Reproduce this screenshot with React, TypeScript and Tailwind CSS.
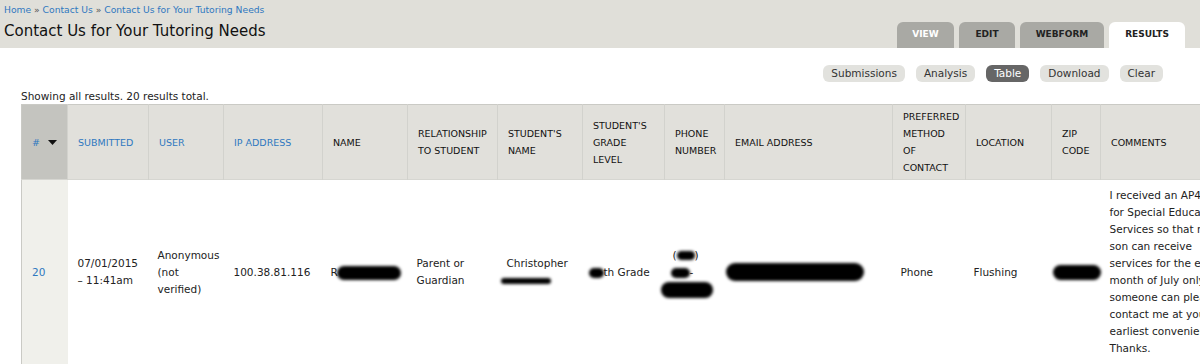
import React from "react";

function Blob({ className }: { className: string }) {
  return (
    <span
      className={"inline-block bg-black rounded-full blur-[1.4px] align-middle " + className}
    />
  );
}

function Tab({ label, active, light, w }: { label: string; active?: boolean; light?: boolean; w: string }) {
  return (
    <div
      className={
        "flex h-[26px] items-center justify-center rounded-t-[6px] text-[9px] font-bold " +
        w +
        (active ? " bg-white text-[#222]" : light ? " bg-[#a9a9a4] text-white" : " bg-[#a9a9a4] text-[#222]")
      }
    >
      {label}
    </div>
  );
}

function Btn({ label, active }: { label: string; active?: boolean }) {
  return (
    <div
      className={
        "flex h-[17px] items-center rounded-[6px] px-[8px] text-[10.5px] " +
        (active ? "bg-[#666666] text-white" : "bg-[#e2e2de] text-[#333]")
      }
    >
      {label}
    </div>
  );
}

const th = "border-r border-[#d2d2cd] pl-[10px] pr-[4px] text-left align-middle font-normal text-[9.5px] leading-[17px] whitespace-nowrap";
const td = "pr-[4px] text-left align-middle text-[10.5px] leading-[17px] whitespace-nowrap";

export default function App() {
  return (
    <div className="h-[364px] w-[1200px] overflow-hidden bg-white font-['DejaVu_Sans',sans-serif] text-[#222]">
      <div className="flex h-[48px] justify-between bg-[#e0dfd9]">
        <div className="pl-[4px] pt-[3px]">
          <div className="text-[9.2px] leading-[13px] text-[#2f78c0]">
            Home <span className="text-[#555]">»</span> Contact Us <span className="text-[#555]">»</span> Contact Us for Your Tutoring Needs
          </div>
          <h1 className="mt-[5px] text-[15px] leading-[20px] text-[#111]">Contact Us for Your Tutoring Needs</h1>
        </div>
        <div className="flex items-end gap-[5px] pr-[15px]">
          <Tab label="VIEW" light w="w-[57px]" />
          <Tab label="EDIT" w="w-[56px]" />
          <Tab label="WEBFORM" w="w-[84px]" />
          <Tab label="RESULTS" active w="w-[76px]" />
        </div>
      </div>

      <div className="mt-[17px] flex justify-end gap-[11px] pr-[37px]">
        <Btn label="Submissions" />
        <Btn label="Analysis" />
        <Btn label="Table" active />
        <Btn label="Download" />
        <Btn label="Clear" />
      </div>

      <div className="mt-[7px] pl-[21px] text-[10.5px] leading-[14px] text-[#222]">
        Showing all results. 20 results total.
      </div>

      <div className="mt-[1px] pl-[21px]">
        <table className="w-[1220px] table-fixed border-collapse border-l border-t border-[#cacac5]">
          <colgroup>
            <col className="w-[46px]" />
            <col className="w-[81px]" />
            <col className="w-[75px]" />
            <col className="w-[99px]" />
            <col className="w-[85px]" />
            <col className="w-[90px]" />
            <col className="w-[85px]" />
            <col className="w-[82px]" />
            <col className="w-[60px]" />
            <col className="w-[168px]" />
            <col className="w-[73px]" />
            <col className="w-[86px]" />
            <col className="w-[49px]" />
            <col className="w-[141px]" />
          </colgroup>
          <thead>
            <tr className="h-[75px] border-b border-[#d6d6d1] bg-[#e1e0db]">
              <th className={th + " bg-[#c4c4bf]"}>
                <span className="inline-flex items-center text-[#2f78c0]">
                  #
                  <svg width="9" height="5" viewBox="0 0 9 5" className="ml-[8px]">
                    <path d="M0 0 H9 L4.5 5 Z" fill="#111" />
                  </svg>
                </span>
              </th>
              <th className={th + " text-[#2f78c0]"}>SUBMITTED</th>
              <th className={th + " text-[#2f78c0]"}>USER</th>
              <th className={th + " text-[#2f78c0]"}>IP ADDRESS</th>
              <th className={th + " text-[#111]"}>NAME</th>
              <th className={th + " text-[#111]"}>
                RELATIONSHIP
                <br />
                TO STUDENT
              </th>
              <th className={th + " text-[#111]"}>
                STUDENT'S
                <br />
                NAME
              </th>
              <th className={th + " text-[#111]"}>
                STUDENT'S
                <br />
                GRADE
                <br />
                LEVEL
              </th>
              <th className={th + " text-[#111]"}>
                PHONE
                <br />
                NUMBER
              </th>
              <th className={th + " text-[#111]"}>EMAIL ADDRESS</th>
              <th className={th + " text-[#111]"}>
                PREFERRED
                <br />
                METHOD
                <br />
                OF
                <br />
                CONTACT
              </th>
              <th className={th + " text-[#111]"}>LOCATION</th>
              <th className={th + " text-[#111]"}>
                ZIP
                <br />
                CODE
              </th>
              <th className={th + " text-[#111]"}>COMMENTS</th>
            </tr>
          </thead>
          <tbody>
            <tr className="h-[185px]">
              <td className={td + " bg-[#f0f0eb] pl-[10px] text-[#2f78c0]"}>20</td>
              <td className={td + " pl-[10px] text-[#222]"}>
                07/01/2015
                <br />– 11:41am
              </td>
              <td className={td + " pl-[9px] text-[#222]"}>
                Anonymous
                <br />
                (not
                <br />
                verified)
              </td>
              <td className={td + " pl-[10px] text-[#222]"}>100.38.81.116</td>
              <td className={td + " pl-[8px] text-[#222]"}>
                R<Blob className="-ml-[1px] h-[14px] w-[64px]" />
              </td>
              <td className={td + " pl-[9px] text-[#222]"}>
                Parent or
                <br />
                Guardian
              </td>
              <td className={td + " pl-[9px] text-[#222]"}>
                Christopher
                <br />
                <Blob className="-ml-[6px] h-[6px] w-[50px] rounded-[2px]" />
              </td>
              <td className={td + " pl-[6px] text-[#222]"}>
                <Blob className="h-[10px] w-[15px] rounded-[2px]" />th Grade
              </td>
              <td className={td + " pl-[8px] text-[#222]"}>
                (<Blob className="h-[9px] w-[18px] rounded-[2px]" />)
                <br />
                <Blob className="-ml-[2px] h-[10px] w-[19px] rounded-[2px]" />-
                <br />
                <Blob className="-ml-[12px] h-[16px] w-[52px]" />
              </td>
              <td className={td + " pl-[1px] text-[#222]"}>
                <Blob className="h-[18px] w-[138px]" />
              </td>
              <td className={td + " pl-[8px] text-[#222]"}>Phone</td>
              <td className={td + " pl-[8px] text-[#222]"}>Flushing</td>
              <td className={td + " pl-[1px] text-[#222]"}>
                <Blob className="h-[15px] w-[48px]" />
              </td>
              <td className={td + " pl-[9px] text-[#222]"}>
                I received an AP4 form
                <br />
                for Special Education
                <br />
                Services so that my
                <br />
                son can receive
                <br />
                services for the entire
                <br />
                month of July only
                <br />
                someone can please
                <br />
                contact me at your
                <br />
                earliest convenience.
                <br />
                Thanks.
              </td>
            </tr>
          </tbody>
        </table>
      </div>
    </div>
  );
}
